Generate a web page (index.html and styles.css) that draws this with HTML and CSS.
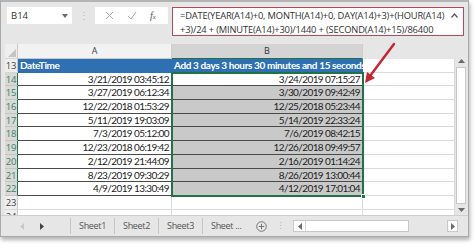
FILE: index.html
```html
<!DOCTYPE html>
<html lang="en">
<head>
  <meta charset="UTF-8" />
  <title>DateTime add formula</title>
  <link rel="stylesheet" href="styles.css">
</head>
<body>
  <div class="window">
    <div class="fbar">
      <div class="namebox">
        <span>B14</span>
        <svg class="caret" width="6" height="4" viewBox="0 0 6 4"><path d="M0 0H6L3 4Z" fill="#6a6a6a"/></svg>
      </div>
      <div class="grip">⋮</div>
      <div class="fxbox">
        <svg width="9" height="9" viewBox="0 0 9 9"><path d="M1 1L8 8M8 1L1 8" stroke="#a8a8a8" stroke-width="1"/></svg>
        <svg width="10" height="9" viewBox="0 0 10 9"><path d="M1 5L4 8L9 1" stroke="#a8a8a8" stroke-width="1" fill="none"/></svg>
        <span class="fx">f<small>x</small></span>
      </div>
      <div class="formula">
        <div class="fline">=DATE(YEAR(A14)+0, MONTH(A14)+0, DAY(A14)+3)+(HOUR(A14)</div>
        <div class="fline">+3)/24 + (MINUTE(A14)+30)/1440 + (SECOND(A14)+15)/86400</div>
        <svg class="collapse" width="7" height="5" viewBox="0 0 7 5"><path d="M0.5 4.5L3.5 1L6.5 4.5" stroke="#555" stroke-width="1.2" fill="none"/></svg>
      </div>
    </div>

    <div class="sheet">
      <div class="grid">
        <div class="row head">
          <div class="rn corner"><svg width="8" height="8" viewBox="0 0 8 8"><path d="M8 0V8H0Z" fill="#c4c4c4"/></svg></div>
          <div class="ch">A</div>
          <div class="ch on">B</div>
          <div class="ch c"></div>
        </div>
        <div class="row title">
          <div class="rn">13</div>
          <div class="cell a t">DateTime</div>
          <div class="cell b t">Add 3 days 3 hours 30 minutes and 15 seconds</div>
          <div class="cell c"></div>
        </div>
        <div class="row data">
          <div class="rn on">14</div>
          <div class="cell a">3/21/2019 03:45:12</div>
          <div class="cell b active">3/24/2019 07:15:27</div>
          <div class="cell c"></div>
        </div>
        <div class="row data">
          <div class="rn on">15</div>
          <div class="cell a">3/27/2019 06:12:34</div>
          <div class="cell b">3/30/2019 09:42:49</div>
          <div class="cell c"></div>
        </div>
        <div class="row data">
          <div class="rn on">16</div>
          <div class="cell a">12/22/2018 01:53:29</div>
          <div class="cell b">12/25/2018 05:23:44</div>
          <div class="cell c"></div>
        </div>
        <div class="row data">
          <div class="rn on">17</div>
          <div class="cell a">5/11/2019 19:03:09</div>
          <div class="cell b">5/14/2019 22:33:24</div>
          <div class="cell c"></div>
        </div>
        <div class="row data">
          <div class="rn on">18</div>
          <div class="cell a">7/3/2019 05:12:00</div>
          <div class="cell b">7/6/2019 08:42:15</div>
          <div class="cell c"></div>
        </div>
        <div class="row data">
          <div class="rn on">19</div>
          <div class="cell a">12/23/2018 06:19:42</div>
          <div class="cell b">12/26/2018 09:49:57</div>
          <div class="cell c"></div>
        </div>
        <div class="row data">
          <div class="rn on">20</div>
          <div class="cell a">2/12/2019 21:44:09</div>
          <div class="cell b">2/16/2019 01:14:24</div>
          <div class="cell c"></div>
        </div>
        <div class="row data">
          <div class="rn on">21</div>
          <div class="cell a">8/23/2019 09:30:29</div>
          <div class="cell b">8/26/2019 13:00:44</div>
          <div class="cell c"></div>
        </div>
        <div class="row data">
          <div class="rn on">22</div>
          <div class="cell a">4/9/2019 13:30:49</div>
          <div class="cell b">4/12/2019 17:01:04</div>
          <div class="cell c"></div>
        </div>
        <div class="row empty">
          <div class="rn">23</div>
          <div class="cell a"></div>
          <div class="cell b"></div>
          <div class="cell c"></div>
        </div>
        <div class="row empty">
          <div class="rn">24</div>
          <div class="cell a"></div>
          <div class="cell b"></div>
          <div class="cell c"></div>
        </div>
        <div class="selection"><span class="handle"></span></div>
      </div>
      <div class="vscroll">
        <div class="sbtn"><svg width="7" height="4" viewBox="0 0 7 4"><path d="M0 4H7L3.5 0Z" fill="#6a6a6a"/></svg></div>
        <div class="vthumb"></div>
        <div class="sbtn"><svg width="7" height="4" viewBox="0 0 7 4"><path d="M0 0H7L3.5 4Z" fill="#6a6a6a"/></svg></div>
      </div>
    </div>

    <div class="tabs">
      <div class="nav">
        <svg width="4" height="7" viewBox="0 0 4 7"><path d="M4 0V7L0 3.5Z" fill="#c8c8c8"/></svg>
        <svg width="4" height="7" viewBox="0 0 4 7"><path d="M0 0V7L4 3.5Z" fill="#444"/></svg>
      </div>
      <div class="tab">Sheet1</div>
      <div class="tab">Sheet2</div>
      <div class="tab">Sheet3</div>
      <div class="tab last">Sheet ...</div>
      <svg class="add" width="11" height="11" viewBox="0 0 11 11"><circle cx="5.5" cy="5.5" r="4.8" stroke="#777" fill="none"/><path d="M5.5 2.8V8.2M2.8 5.5H8.2" stroke="#777"/></svg>
      <div class="grip small">⋮</div>
      <div class="hscroll">
        <div class="hbtn"><svg width="4" height="7" viewBox="0 0 4 7"><path d="M4 0V7L0 3.5Z" fill="#6a6a6a"/></svg></div>
        <div class="hthumb"></div>
      </div>
      <div class="hbtn right"><svg width="4" height="7" viewBox="0 0 4 7"><path d="M0 0V7L4 3.5Z" fill="#6a6a6a"/></svg></div>
    </div>
  </div>

  <svg class="pointer" width="474" height="245" viewBox="0 0 474 245">
    <line x1="394" y1="44" x2="370" y2="76" stroke="#c3262e" stroke-width="2.4" stroke-linecap="round"/>
    <path d="M365 83L375 78L367 72Z" fill="#c3262e"/>
  </svg>
</body>
</html>
```

FILE: styles.css
```css
* { box-sizing: border-box; margin: 0; padding: 0; }
body { background: white; width: 474px; height: 245px; overflow: hidden; position: relative; font-family: "Open Sans", sans-serif; }

.window {
  width: 469px;
  height: 237px;
  background: #e6e6e6;
  border: 1px solid #a9a9a9;
  border-top: 2px solid #b4b4b4;
  box-shadow: 1px 3px 4px rgba(0, 0, 0, 0.3);
  display: flex;
  flex-direction: column;
  overflow: hidden;
}

/* formula bar */
.fbar { display: flex; align-items: flex-start; height: 42px; flex-shrink: 0; padding: 5px 0 0 6px; }
.namebox {
  width: 65px; height: 17px; background: white;
  display: flex; align-items: center; justify-content: space-between;
  padding: 0 4px 0 4px; font-size: 9.5px; color: #333;
}
.grip { width: 23px; text-align: center; color: #b8b8b8; font-size: 10px; line-height: 17px; }
.fxbox {
  width: 73px; height: 17px; background: white;
  display: flex; align-items: center; gap: 13px; padding-left: 10px;
}
.fx { font-family: "Liberation Serif", serif; font-style: italic; font-size: 10px; color: #555; }
.fx small { font-size: 7px; }
.formula {
  position: relative;
  width: 292px; height: 29px; margin-left: 4px;
  background: white; border: 1px solid #b5495b;
  padding: 1px 0 0 7px; font-size: 9.35px; line-height: 14px; color: #333;
}
.fline { white-space: nowrap; letter-spacing: -0.17px; }
.collapse { position: absolute; right: 5px; top: 5px; }

/* sheet */
.sheet { display: flex; height: 171px; flex-shrink: 0; padding-left: 4px; }
.grid { position: relative; width: 450px; display: flex; flex-direction: column; overflow: hidden; background: white; }
.row { display: flex; height: 13.7px; flex-shrink: 0; }
.row.head { height: 15px; background: #e6e6e6; }
.rn {
  width: 13px; flex-shrink: 0; background: #efefef;
  border-right: 1px solid #c8c8c8; border-bottom: 1px solid #d6d6d6;
  font-size: 9.5px; color: #444; line-height: 13px; text-align: center; letter-spacing: -0.3px;
}
.rn.on { background: #d9d9d9; color: #3d8060; border-right: 1px solid #217346; border-bottom-color: #c4c4c4; }
.rn.corner { display: flex; align-items: flex-end; justify-content: flex-end; padding: 0 1px 1px 0; }
.ch {
  width: 154px; flex-shrink: 0; background: #f2f2f2;
  border-right: 1px solid #cdcdcd; border-bottom: 1px solid #c8c8c8;
  font-size: 9px; color: #444; text-align: center; line-height: 14px;
}
.ch.on { width: 191px; background: #d4d4d4; color: #333; border-bottom: 1px solid #217346; }
.ch.c { width: auto; flex: 1; background: #e6e6e6; border: none; }

.cell {
  flex-shrink: 0; font-family: Lato, sans-serif; font-size: 10px; color: #222;
  line-height: 13px; text-align: right; padding-right: 2px; white-space: nowrap; overflow: hidden;
  border-bottom: 1px solid #dadada; border-right: 1px solid #dadada; letter-spacing: -0.6px;
}
.cell.a { width: 154px; }
.cell.b { width: 191px; }
.cell.c { flex: 1; }
.row.data .cell.a, .row.data .cell.b { border-bottom-color: #4a4a4a; }
.row.data .cell.a { border-right-color: #4a4a4a; }
.row.data .cell.b { background: #c9c9c9; }
.row.data .cell.b.active { background: white; }
.row.title .cell.t {
  background: #2f70b2; color: white; font-weight: bold; text-align: left;
  padding-left: 2px; border-right: none; border-bottom-color: #2f70b2; letter-spacing: -0.38px;
}

.selection {
  position: absolute; left: 166px; top: 27.7px; width: 193px; height: 125.3px;
  border: 2px solid #217346; pointer-events: none;
}
.handle {
  position: absolute; right: -4px; bottom: -4px; width: 5px; height: 5px;
  background: #217346; border: 1px solid white;
}

.vscroll {
  width: 12px; display: flex; flex-direction: column; align-items: center;
  padding-top: 12px; gap: 1px;
}
.sbtn { width: 10px; height: 10px; display: flex; align-items: center; justify-content: center; }
.vthumb { width: 10px; flex: 1; background: white; border: 1px solid #c8c8c8; }

/* sheet tabs */
.tabs {
  flex: 1; display: flex; align-items: center;
  border-top: 1px solid #cfcfcf; font-size: 9px; color: #555;
}
.nav { width: 69px; flex-shrink: 0; display: flex; gap: 16px; padding-left: 19px; }
.tab {
  width: 44px; flex-shrink: 0; height: 16px; line-height: 16px;
  border-left: 1px solid #c6c6c6; padding-left: 8px; white-space: nowrap; letter-spacing: -0.3px;
}
.tab.last { width: 52px; }
.add { margin-left: 2px; flex-shrink: 0; }
.grip.small { width: 26px; font-size: 9px; line-height: 12px; }
.hscroll { display: flex; width: 116px; height: 12px; background: white; border: 1px solid #c8c8c8; }
.hbtn { width: 11px; display: flex; align-items: center; justify-content: center; }
.hthumb { flex: 1; border-left: 1px solid #d4d4d4; }
.hbtn.right { margin-left: 38px; height: 12px; background: white; border: 1px solid #c8c8c8; }

.pointer { position: absolute; left: 0; top: 0; pointer-events: none; }
```
